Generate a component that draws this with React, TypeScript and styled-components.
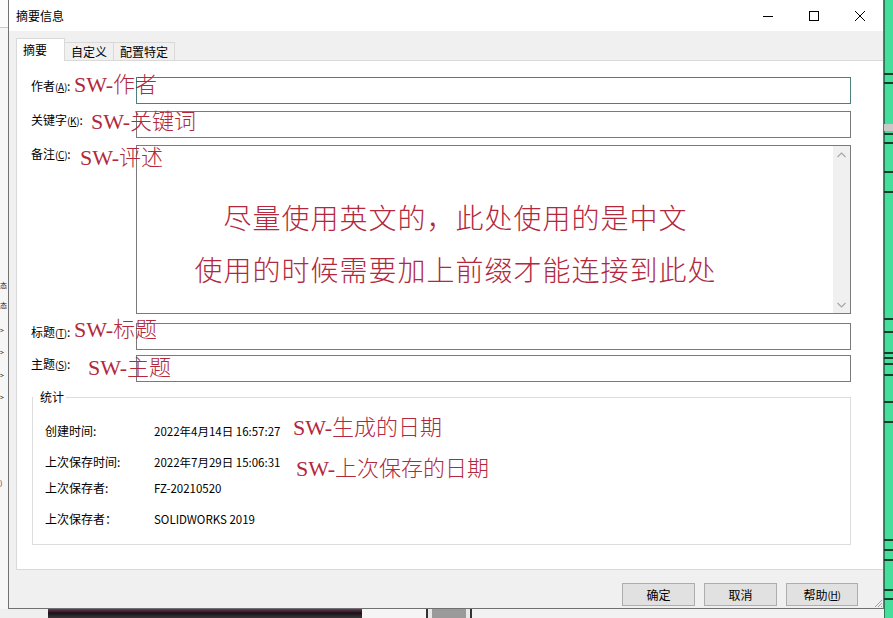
import React from "react";
import styled, { createGlobalStyle } from "styled-components";

const UI_FONT = `"Noto Sans CJK SC", "Microsoft YaHei", sans-serif`;
const NOTE_FONT = `"Liberation Serif", "Noto Sans CJK SC", serif`;
const NOTE_RED = "#b3283c";

const GlobalStyle = createGlobalStyle`
  html, body {
    margin: 0;
    padding: 0;
  }
  body {
    background: #f0f0f0;
    font-family: ${UI_FONT};
    font-size: 12px;
    color: #000;
  }
  * {
    box-sizing: border-box;
  }
`;

const Screen = styled.div`
  width: 893px;
  height: 618px;
  overflow: hidden;
  display: grid;
  grid-template-columns: 8px 876px 9px;
  grid-template-rows: 609px 9px;
`;

/* ---------- things behind the dialog ---------- */

const LeftBackdrop = styled.div`
  grid-column: 1;
  grid-row: 1;
  background: #f6f6f6;
  overflow: hidden;
  display: flex;
  flex-direction: column;
  border-top: 27px solid #fbfbfb;
  box-shadow: inset 0 1px 0 #c8c8c8;
`;

const EdgeGlyph = styled.span<{ $gap: number }>`
  display: block;
  margin-top: ${(p) => p.$gap}px;
  height: 14px;
  line-height: 14px;
  font-size: 7px;
  white-space: nowrap;
  color: #222;
`;

const BottomBackdrop = styled.div`
  grid-column: 1 / 3;
  grid-row: 2;
  display: flex;
`;

const Segment = styled.div<{ $w?: number; $bg: string }>`
  ${(p) => (p.$w ? `width: ${p.$w}px;` : "flex: 1;")}
  background: ${(p) => p.$bg};
`;

const BoxSegment = styled.div`
  width: 46px;
  background: #9a9a9a;
  border-left: 2px solid #333;
  border-right: 2px solid #333;
  box-shadow: inset 4px 0 0 #e8e8e8, inset -4px 0 0 #e8e8e8;
`;

const RightBackdrop = styled.div`
  grid-column: 3;
  grid-row: 1 / 3;
  display: flex;
`;

/* ---------- dialog window ---------- */

const Window = styled.div`
  grid-column: 2;
  grid-row: 1;
  position: relative;
  display: flex;
  flex-direction: column;
  background: #f0f0f0;
  border: 1px solid #707070;
  border-top: none;
`;

const TitleBar = styled.div`
  height: 31px;
  background: #fff;
  display: flex;
  align-items: center;
  padding-left: 7px;
`;

const Title = styled.div`
  flex: 1;
  font-size: 12px;
  line-height: 16px;
`;

const WinButton = styled.div`
  width: 46px;
  height: 31px;
  display: flex;
  align-items: center;
  justify-content: center;
`;

const TabRow = styled.div`
  height: 29px;
  display: flex;
  align-items: flex-end;
  padding-left: 7px;
`;

const Tab = styled.div<{ $active?: boolean }>`
  position: relative;
  z-index: ${(p) => (p.$active ? 1 : 0)};
  height: ${(p) => (p.$active ? 23 : 18)}px;
  margin-bottom: ${(p) => (p.$active ? -1 : 0)}px;
  padding: ${(p) => (p.$active ? "2px 17px 0 6px" : "0 6px")};
  background: ${(p) => (p.$active ? "#fff" : "#f0f0f0")};
  border: 1px solid #d9d9d9;
  border-bottom: none;
  ${(p) => (p.$active ? "" : "border-left: none;")}
  font-size: 12px;
  line-height: 17px;
  white-space: nowrap;
`;

const Panel = styled.div`
  margin-left: 7px;
  height: 510px;
  background: #fff;
  border: 1px solid #d9d9d9;
  border-right: none;
  padding: 16px 0 0 14px;
  display: flex;
  flex-direction: column;
`;

const FieldRow = styled.div<{ $h: number; $gap?: number }>`
  position: relative;
  display: grid;
  grid-template-columns: 105px 715px;
  height: ${(p) => p.$h}px;
  margin-top: ${(p) => p.$gap ?? 0}px;
`;

const FieldLabel = styled.div`
  padding-top: 1px;
  line-height: 16px;
  font-size: 12px;
  white-space: nowrap;
`;

const Key = styled.span`
  font-size: 10px;
  letter-spacing: -0.3px;
  u {
    text-underline-offset: 1px;
  }
`;

const TextBox = styled.div<{ $focus?: boolean }>`
  background: #fff;
  border: 1px solid ${(p) => (p.$focus ? "#4e7f80" : "#7a7a7a")};
`;

const MemoBox = styled(TextBox)`
  display: flex;
`;

const MemoText = styled.div`
  flex: 1;
  display: flex;
  flex-direction: column;
  align-items: center;
  row-gap: 16px;
  padding: 56px 59px 0 0;
`;

const MemoLine = styled.div`
  font-family: ${NOTE_FONT};
  font-weight: 300;
  font-size: 28px;
  line-height: 36px;
  letter-spacing: 1px;
  color: ${NOTE_RED};
  white-space: nowrap;
`;

const ScrollTrack = styled.div`
  width: 17px;
  background: #f0f0f0;
  display: flex;
  flex-direction: column;
  justify-content: space-between;
  align-items: center;
  padding: 6px 0 5px;
`;

const Note = styled.div<{ $x: number; $y: number }>`
  position: absolute;
  left: ${(p) => p.$x}px;
  top: ${(p) => p.$y}px;
  z-index: 2;
  font-family: ${NOTE_FONT};
  font-weight: 300;
  font-size: 22px;
  line-height: 24px;
  color: ${NOTE_RED};
  white-space: nowrap;
  pointer-events: none;
`;

const StatsGroup = styled.fieldset`
  margin: 7px 0 0 1px;
  width: 819px;
  height: 156px;
  border: 1px solid #dcdcdc;
  padding: 0 0 0 12px;
  min-width: 0;
`;

const StatsLegend = styled.legend`
  margin-left: -12px;
  padding: 0 2px 0 7px;
  font-size: 12px;
  line-height: 16px;
`;

const StatRow = styled.div<{ $gap: number }>`
  position: relative;
  display: grid;
  grid-template-columns: 109px auto;
  align-items: center;
  height: 16px;
  margin-top: ${(p) => p.$gap}px;
  white-space: nowrap;
`;

const StatLabel = styled.span`
  font-size: 12px;
`;

const StatValue = styled.span`
  font-size: 11.5px;
`;

const ButtonBar = styled.div`
  display: flex;
  justify-content: flex-end;
  gap: 9px;
  padding: 13px 25px 0 0;
`;

const Button = styled.div<{ $w: number }>`
  width: ${(p) => p.$w}px;
  height: 23px;
  display: flex;
  align-items: center;
  justify-content: center;
  background: #e1e1e1;
  border: 1px solid #adadad;
  font-size: 12px;
`;

const Grip = styled.svg`
  position: absolute;
  right: 0;
  bottom: 0;
`;

const greenLines = [73, 82, 133, 142, 171, 191, 318, 331, 352, 357, 363, 374, 401, 421, 539, 549, 559, 589, 598];

function GreenStrip() {
  return (
    <svg width="9" height="618" viewBox="0 0 9 618">
      <rect width="9" height="618" fill="#45de9d" />
      <rect x="0" width="1" height="618" fill="#2b7d58" />
      <rect y="124" width="9" height="7" fill="#c9c9c9" />
      {greenLines.map((y) => (
        <rect key={y} y={y} width="9" height="2" fill="#173d2c" />
      ))}
    </svg>
  );
}

const stats = [
  { label: "创建时间:", value: "2022年4月14日 16:57:27", gap: 17 },
  { label: "上次保存时间:", value: "2022年7月29日 15:06:31", gap: 15 },
  { label: "上次保存者:", value: "FZ-20210520", gap: 10 },
  { label: "上次保存者：", value: "SOLIDWORKS 2019", gap: 15 },
];

export default function App() {
  return (
    <>
      <GlobalStyle />
      <Screen>
        <LeftBackdrop>
          <EdgeGlyph $gap={251}>态</EdgeGlyph>
          <EdgeGlyph $gap={6}>态</EdgeGlyph>
          <EdgeGlyph $gap={11}>&gt;</EdgeGlyph>
          <EdgeGlyph $gap={8}>&gt;</EdgeGlyph>
          <EdgeGlyph $gap={9}>&gt;</EdgeGlyph>
          <EdgeGlyph $gap={8}>&gt;</EdgeGlyph>
          <EdgeGlyph $gap={72}>)</EdgeGlyph>
        </LeftBackdrop>

        <Window>
          <TitleBar>
            <Title>摘要信息</Title>
            <WinButton>
              <svg width="10" height="10" viewBox="0 0 10 10">
                <path d="M0 5.5H10" stroke="#000" strokeWidth="1" />
              </svg>
            </WinButton>
            <WinButton>
              <svg width="10" height="10" viewBox="0 0 10 10">
                <rect x="0.5" y="0.5" width="9" height="9" fill="none" stroke="#000" strokeWidth="1" />
              </svg>
            </WinButton>
            <WinButton>
              <svg width="10" height="10" viewBox="0 0 10 10">
                <path d="M0 0L10 10M10 0L0 10" stroke="#000" strokeWidth="1" />
              </svg>
            </WinButton>
          </TitleBar>

          <TabRow>
            <Tab $active>摘要</Tab>
            <Tab>自定义</Tab>
            <Tab>配置特定</Tab>
          </TabRow>

          <Panel>
            <FieldRow $h={27}>
              <FieldLabel>
                作者<Key>(<u>A</u>)</Key>:
              </FieldLabel>
              <TextBox $focus />
              <Note $x={43} $y={-4}>SW-作者</Note>
            </FieldRow>

            <FieldRow $h={27} $gap={7}>
              <FieldLabel>
                关键字<Key>(<u>K</u>)</Key>:
              </FieldLabel>
              <TextBox />
              <Note $x={60} $y={-1}>SW-关键词</Note>
            </FieldRow>

            <FieldRow $h={169} $gap={7}>
              <FieldLabel>
                备注<Key>(<u>C</u>)</Key>:
              </FieldLabel>
              <MemoBox>
                <MemoText>
                  <MemoLine>尽量使用英文的，此处使用的是中文</MemoLine>
                  <MemoLine>使用的时候需要加上前缀才能连接到此处</MemoLine>
                </MemoText>
                <ScrollTrack>
                  <svg width="9" height="6" viewBox="0 0 9 6">
                    <path d="M0.5 5L4.5 1L8.5 5" fill="none" stroke="#a6a6a6" strokeWidth="1.2" />
                  </svg>
                  <svg width="9" height="6" viewBox="0 0 9 6">
                    <path d="M0.5 1L4.5 5L8.5 1" fill="none" stroke="#a6a6a6" strokeWidth="1.2" />
                  </svg>
                </ScrollTrack>
              </MemoBox>
              <Note $x={49} $y={1}>SW-评述</Note>
            </FieldRow>

            <FieldRow $h={27} $gap={9}>
              <FieldLabel>
                标题<Key>(<u>T</u>)</Key>:
              </FieldLabel>
              <TextBox />
              <Note $x={43} $y={-5}>SW-标题</Note>
            </FieldRow>

            <FieldRow $h={27} $gap={5}>
              <FieldLabel>
                主题<Key>(<u>S</u>)</Key>:
              </FieldLabel>
              <TextBox />
              <Note $x={57} $y={1}>SW-主题</Note>
            </FieldRow>

            <StatsGroup>
              <StatsLegend>统计</StatsLegend>
              {stats.map((s, i) => (
                <StatRow key={i} $gap={s.gap}>
                  <StatLabel>{s.label}</StatLabel>
                  <StatValue>{s.value}</StatValue>
                  {i === 0 && (
                    <Note $x={248} $y={-6}>SW-生成的日期</Note>
                  )}
                  {i === 1 && (
                    <Note $x={251} $y={4}>SW-上次保存的日期</Note>
                  )}
                </StatRow>
              ))}
            </StatsGroup>
          </Panel>

          <ButtonBar>
            <Button $w={73}>确定</Button>
            <Button $w={73}>取消</Button>
            <Button $w={72}>
              帮助<Key>(<u>H</u>)</Key>
            </Button>
          </ButtonBar>

          <Grip width="10" height="10" viewBox="0 0 10 10">
            <path d="M9 2L2 9M9 5L5 9M9 8L8 9" stroke="#a0a0a0" strokeWidth="1" />
          </Grip>
        </Window>

        <RightBackdrop>
          <GreenStrip />
        </RightBackdrop>

        <BottomBackdrop>
          <Segment $w={48} $bg="#efefef" />
          <Segment $w={314} $bg="linear-gradient(180deg, #6b3a5c 0%, #1a1016 45%, #3a3a3a 100%)" />
          <Segment $w={64} $bg="#f5f5f5" />
          <BoxSegment />
          <Segment $bg="#f2f2f2" />
        </BottomBackdrop>
      </Screen>
    </>
  );
}
